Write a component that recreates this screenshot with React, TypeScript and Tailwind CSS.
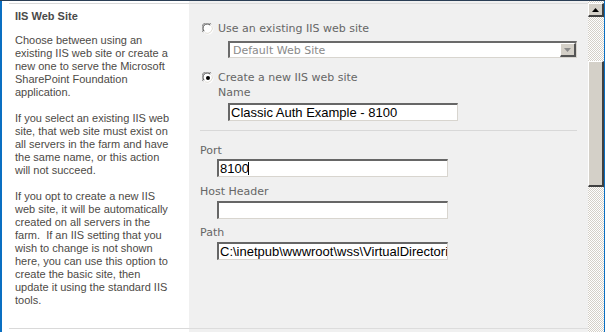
import React from 'react';

function Radio({ checked }: { checked?: boolean }) {
  return (
    <svg width="12" height="12" viewBox="0 0 12 12" className="shrink-0">
      <circle cx="6" cy="6" r="5.5" fill="#ffffff" />
      <path d="M1.2 9.2 A5.2 5.2 0 0 1 9.2 1.2" fill="none" stroke="#808080" strokeWidth="1" />
      <path d="M2.2 8.2 A4 4 0 0 1 8.2 2.2" fill="none" stroke="#404040" strokeWidth="1" />
      <path d="M9.8 2.8 A5.2 5.2 0 0 1 2.8 9.8" fill="none" stroke="#e0ddd6" strokeWidth="1" />
      {checked && <circle cx="6" cy="6" r="2" fill="#000000" />}
    </svg>
  );
}

function TextBox({ value, width, cursor }: { value: string; width: string; cursor?: boolean }) {
  return (
    <input
      type="text"
      readOnly
      defaultValue={value}
      className={`${width} h-[18px] block bg-white border-t-2 border-l-2 border-[#666666] border-b border-r border-b-[#d8d5cf] border-r-[#d8d5cf] pl-[1px] pr-0 py-0 text-[13px] text-black outline-none ${cursor ? 'caret-black' : ''}`}
      style={{ fontFamily: '"Liberation Sans", Arial, sans-serif' }}
    />
  );
}

export default function App() {
  const label = { fontFamily: '"DejaVu Sans", Verdana, sans-serif' };
  return (
    <div className="w-[605px] h-[332px] overflow-hidden bg-white flex flex-col">
      <div className="h-px bg-[#2a3e55]" />
      <div className="flex flex-1">
        <div className="w-[2px] bg-[#0a6fc2]" />

        {/* description column */}
        <div className="w-[187px] bg-white">
          <div
            className="ml-[7px] mt-[2px] h-[326px] border-t border-b border-[#d9d9d9] pl-[6px] pt-[6px] text-[11px] leading-[13px] text-[#4d4a46]"
            style={{ fontFamily: 'Tahoma, "Liberation Sans", Arial, sans-serif' }}
          >
            <div className="font-bold text-[#4a4a4a]">IIS Web Site</div>
            <p className="mt-[11px]">
              Choose between using an<br />
              existing IIS web site or create a<br />
              new one to serve the Microsoft<br />
              SharePoint Foundation<br />
              application.
            </p>
            <p className="mt-[13px]">
              If you select an existing IIS web<br />
              site, that web site must exist on<br />
              all servers in the farm and have<br />
              the same name, or this action<br />
              will not succeed.
            </p>
            <p className="mt-[13px] whitespace-pre">
              If you opt to create a new IIS<br />
              web site, it will be automatically<br />
              created on all servers in the<br />
              farm.  If an IIS setting that you<br />
              wish to change is not shown<br />
              here, you can use this option to<br />
              create the basic site, then<br />
              update it using the standard IIS<br />
              tools.
            </p>
          </div>
        </div>

        {/* form column */}
        <div className="w-[399px] bg-[#f0f0f0]">
          <div
            className="mt-[2px] h-[326px] border-t border-b border-[#dcdcdc] text-[11px] leading-[13px] text-[#666666]"
            style={label}
          >
            <div className="flex items-center gap-[4px] pl-[13px] mt-[18px]">
              <Radio />
              <span>Use an existing IIS web site</span>
            </div>
            <div className="ml-[39px] mt-[6px] w-[349px] h-[17px] bg-white border-t-2 border-l-2 border-[#6a6a6a] border-b border-r border-b-[#d8d5cf] border-r-[#d8d5cf] flex items-center">
              <span className="flex-1 pl-[3px] text-[#8a8a8a]">Default Web Site</span>
              <div className="w-[16px] h-[14px] bg-[#d4d0c8] border-t border-l border-white border-b-2 border-r-2 border-b-[#555555] border-r-[#555555] flex items-center justify-center">
                <svg width="7" height="4" viewBox="0 0 7 4">
                  <path d="M0 0 H7 L3.5 4 Z" fill="#8a8a8a" />
                </svg>
              </div>
            </div>
            <div className="flex items-center gap-[4px] pl-[13px] mt-[13px]">
              <Radio checked />
              <span>Create a new IIS web site</span>
            </div>
            <div className="pl-[29px] mt-[2px]">Name</div>
            <div className="ml-[39px] mt-[4px]">
              <TextBox value="Classic Auth Example - 8100" width="w-[230px]" />
            </div>
            <div className="ml-[11px] mr-[11px] mt-[9px] border-t border-[#d8d8d8]" />
            <div className="pl-[11px] mt-[13px]">Port</div>
            <div className="ml-[28px] mt-[2px] relative w-[231px]">
              <TextBox value="8100" width="w-[231px]" cursor />
              <span className="absolute left-[31px] top-[3px] w-px h-[13px] bg-black" />
            </div>
            <div className="pl-[11px] mt-[8px]">Host Header</div>
            <div className="ml-[28px] mt-[3px]">
              <TextBox value="" width="w-[231px]" />
            </div>
            <div className="pl-[11px] mt-[7px]">Path</div>
            <div className="ml-[28px] mt-[3px]">
              <TextBox value="C:\inetpub\wwwroot\wss\VirtualDirectories" width="w-[231px]" />
            </div>
          </div>
        </div>

        {/* scrollbar */}
        <div className="w-[16px] flex flex-col bg-[repeating-conic-gradient(#d4d0c8_0_25%,#ffffff_0_50%)] bg-[length:2px_2px]">
          <div className="mt-[2px] h-[14px] bg-[#d4d0c8] border-t border-l border-white border-b-2 border-r-2 border-b-[#404040] border-r-[#404040] flex items-center justify-center">
            <svg width="7" height="4" viewBox="0 0 7 4">
              <path d="M0 4 H7 L3.5 0 Z" fill="#000000" />
            </svg>
          </div>
          <div className="mt-[44px] h-[126px] bg-[#d4d0c8] border-t border-l border-white border-b-2 border-r-2 border-b-[#404040] border-r-[#404040]" />
        </div>
        <div className="w-px bg-[#0a6fc2]" />
      </div>
    </div>
  );
}
